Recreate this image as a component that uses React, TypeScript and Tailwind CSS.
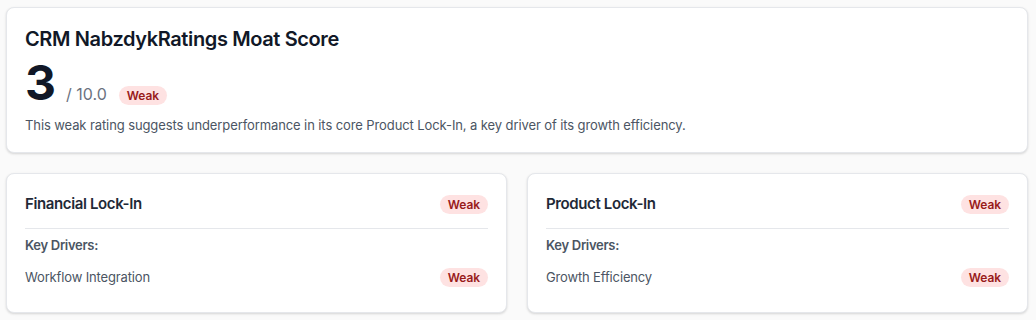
import React from 'react'

function Badge({ label }: { label: string }) {
  return (
    <span className="inline-block rounded-full bg-[#fee2e2] px-2 py-0.5 text-xs leading-[15px] font-semibold tracking-[-0.1px] text-[#991b1b]">
      {label}
    </span>
  )
}

function PillarCard({ title, rating, drivers }: { title: string; rating: string; drivers: { name: string; rating: string }[] }) {
  return (
    <div className="rounded-lg border border-[#e5e7eb] bg-white px-[18px] pt-[18px] pb-[17px] shadow-[0_1px_3px_rgba(0,0,0,0.1),0_1px_2px_rgba(0,0,0,0.06)]">
      <div className="flex h-6 items-center justify-between">
        <h3 className="text-[15px] leading-6 font-semibold tracking-[-0.375px] text-[#1f2937]">{title}</h3>
        <Badge label={rating} />
      </div>
      <div className="mt-3 border-t border-[#e5e7eb]" />
      <p className="mt-1.5 text-[13px] leading-5 font-semibold tracking-[-0.3px] text-[#4b5563]">Key Drivers:</p>
      <ul className="mt-3 pb-2">
        {drivers.map(d => (
          <li key={d.name} className="flex h-5 items-center justify-between">
            <span className="text-[13px] leading-5 tracking-[-0.15px] text-[#4b5563]">{d.name}</span>
            <Badge label={d.rating} />
          </li>
        ))}
      </ul>
    </div>
  )
}

export default function App() {
  return (
    <div className="min-h-[320px] bg-[#fafafa] pt-[7px] pr-[8px] pl-[6px] font-['Inter',sans-serif]">
      <div className="rounded-lg border border-[#e5e7eb] bg-white px-[18px] pt-[17px] pb-[17px] shadow-[0_1px_3px_rgba(0,0,0,0.1),0_1px_2px_rgba(0,0,0,0.06)]">
        <h2 className="text-xl leading-7 font-semibold tracking-[-0.38px] text-[#111827]">CRM NabzdykRatings Moat Score</h2>
        <div className="mt-1.5 flex items-baseline">
          <span className="text-5xl leading-none font-bold text-[#111827]">3</span>
          <span className="ml-2.5 text-base leading-6 text-[#6b7280]">/ 10.0</span>
          <span className="ml-3">
            <Badge label="Weak" />
          </span>
        </div>
        <p className="mt-2 text-[13px] leading-5 tracking-[-0.1px] text-[#4b5563]">
          This weak rating suggests underperformance in its core Product Lock-In, a key driver of its growth efficiency.
        </p>
      </div>
      <div className="mt-5 grid grid-cols-2 gap-5">
        <PillarCard title="Financial Lock-In" rating="Weak" drivers={[{ name: 'Workflow Integration', rating: 'Weak' }]} />
        <PillarCard title="Product Lock-In" rating="Weak" drivers={[{ name: 'Growth Efficiency', rating: 'Weak' }]} />
      </div>
    </div>
  )
}
